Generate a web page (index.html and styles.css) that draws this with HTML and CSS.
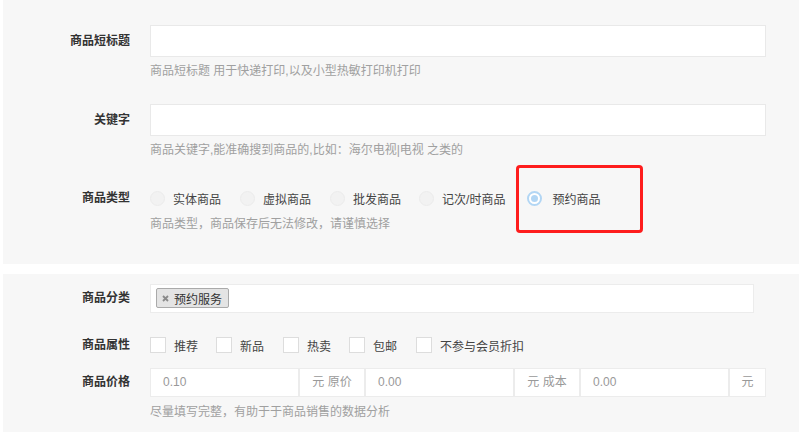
FILE: index.html
```html
<!DOCTYPE html>
<html lang="zh-CN">
<head>
<meta charset="utf-8">
<title>商品编辑</title>
<link rel="stylesheet" href="styles.css">
</head>
<body>
<div class="panel panel-top">
  <div class="group g1">
    <div class="lbl lbl-32">商品短标题</div>
    <div class="ctl">
      <div class="text-input"></div>
      <div class="help">商品短标题 用于快递打印,以及小型热敏打印机打印</div>
    </div>
  </div>
  <div class="group g2">
    <div class="lbl lbl-32">关键字</div>
    <div class="ctl">
      <div class="text-input"></div>
      <div class="help">商品关键字,能准确搜到商品的,比如：海尔电视|电视 之类的</div>
    </div>
  </div>
  <div class="group g3">
    <div class="lbl lbl-24">商品类型</div>
    <div class="ctl">
      <div class="radios">
        <label class="radio"><span class="circle"></span><span>实体商品</span></label>
        <label class="radio"><span class="circle"></span><span>虚拟商品</span></label>
        <label class="radio"><span class="circle"></span><span>批发商品</span></label>
        <label class="radio"><span class="circle"></span><span>记次/时商品</span></label>
        <label class="radio"><span class="circle checked"></span><span>预约商品</span></label>
      </div>
      <div class="help">商品类型，商品保存后无法修改，请谨慎选择</div>
    </div>
  </div>
  <div class="highlight"></div>
</div>

<div class="panel panel-bottom">
  <div class="group">
    <div class="lbl lbl-29">商品分类</div>
    <div class="ctl">
      <div class="select-box">
        <span class="tag"><svg class="tag-x" width="7" height="7" viewBox="0 0 7 7"><path d="M1 1L6 6M6 1L1 6" stroke="#8a8a8a" stroke-width="1.8" fill="none"/></svg>预约服务</span>
      </div>
    </div>
  </div>
  <div class="group g-check">
    <div class="lbl lbl-24">商品属性</div>
    <div class="ctl">
      <div class="checks">
        <label class="check"><span class="box"></span><span>推荐</span></label>
        <label class="check"><span class="box"></span><span>新品</span></label>
        <label class="check"><span class="box"></span><span>热卖</span></label>
        <label class="check"><span class="box"></span><span>包邮</span></label>
        <label class="check"><span class="box"></span><span>不参与会员折扣</span></label>
      </div>
    </div>
  </div>
  <div class="group g-price">
    <div class="lbl lbl-29">商品价格</div>
    <div class="ctl">
      <div class="price-row">
        <div class="p-input">0.10</div>
        <div class="p-addon">元 原价</div>
        <div class="p-input">0.00</div>
        <div class="p-addon">元 成本</div>
        <div class="p-input">0.00</div>
        <div class="p-addon p-addon-sm">元</div>
      </div>
      <div class="help help-price">尽量填写完整，有助于于商品销售的数据分析</div>
    </div>
  </div>
</div>
</body>
</html>
```

FILE: styles.css
```css
* { box-sizing: border-box; }
html, body {
  margin: 0;
  padding: 0;
  background: #ffffff;
}
body {
  font-family: "Liberation Sans", "Noto Sans CJK SC", sans-serif;
  font-size: 12px;
  color: #333;
  width: 799px;
  height: 433px;
  overflow: hidden;
}
.panel {
  margin-left: 3px;
  background: #f7f7f7;
}
.panel-top {
  position: relative;
  height: 264px;
  padding: 25px 0 0;
  margin-bottom: 10px;
}
.panel-bottom {
  height: 158px;
  padding: 10px 0 0;
}
.group {
  display: flex;
  align-items: flex-start;
}
.g2 { margin-top: 23px; }
.g3 { margin-top: 26px; }
.g-check { margin-top: 20px; }
.g-price { margin-top: 11px; }
.lbl {
  width: 127px;
  text-align: right;
  font-weight: bold;
  color: #333;
  font-size: 12px;
  flex-shrink: 0;
  overflow: hidden;
}
.lbl-32 { height: 32px; line-height: 32px; }
.lbl-29 { height: 29px; line-height: 29px; }
.lbl-24 { height: 24px; line-height: 24px; }
.ctl {
  margin-left: 20px;
}
.text-input {
  width: 616px;
  height: 32px;
  background: #fff;
  border: 1px solid #e9e9e9;
}
.help {
  margin-top: 4px;
  height: 20px;
  line-height: 20px;
  color: #a0a0a0;
  white-space: nowrap;
}
.help-price { margin-top: 5px; }
.radios, .checks {
  display: flex;
  align-items: center;
  height: 24px;
}
.radio, .check {
  display: flex;
  align-items: center;
  color: #444;
  margin-right: 19px;
  white-space: nowrap;
}
.radio:nth-child(3) { margin-right: 18px; }
.radio:nth-child(4) { margin-right: 22px; }
.circle {
  width: 15px;
  height: 15px;
  border-radius: 50%;
  background: #f2f2f2;
  border: 1px solid #ececec;
  margin-right: 8px;
  display: flex;
  align-items: center;
  justify-content: center;
}
.circle.checked {
  background: #fff;
  border: 2px solid #b2d6f4;
  margin-right: 10px;
}
.circle.checked::after {
  content: "";
  width: 7px;
  height: 7px;
  border-radius: 50%;
  background: #b2d6f4;
}
.highlight {
  position: absolute;
  left: 513px;
  top: 165px;
  width: 127px;
  height: 68px;
  border: 3px solid #fe1d1d;
  border-radius: 4px;
}
.select-box {
  width: 604px;
  height: 29px;
  background: #fff;
  border: 1px solid #ececec;
  padding: 3px 0 0 5px;
}
.tag {
  display: inline-flex;
  align-items: center;
  height: 20px;
  padding: 0 6px 0 5px;
  background: #e4e4e4;
  border: 1px solid #aaaaaa;
  border-radius: 2px;
  color: #333;
  font-size: 12px;
  vertical-align: top;
}
.tag-x { margin-right: 5px; }
.check { margin-right: 18px; }
.check:nth-child(2), .check:nth-child(4) { margin-right: 19px; }
.box {
  width: 16px;
  height: 16px;
  background: #fff;
  border: 1px solid #dddddd;
  margin-right: 8px;
}
.price-row {
  display: flex;
  height: 29px;
}
.p-input, .p-addon {
  height: 29px;
  line-height: 27px;
  background: #fff;
  border: 1px solid #ececec;
  color: #999;
  overflow: hidden;
}
.p-input {
  width: 149px;
  padding-left: 12px;
}
.p-addon {
  width: 66px;
  text-align: center;
}
.p-addon-sm { width: 37px; }
```
